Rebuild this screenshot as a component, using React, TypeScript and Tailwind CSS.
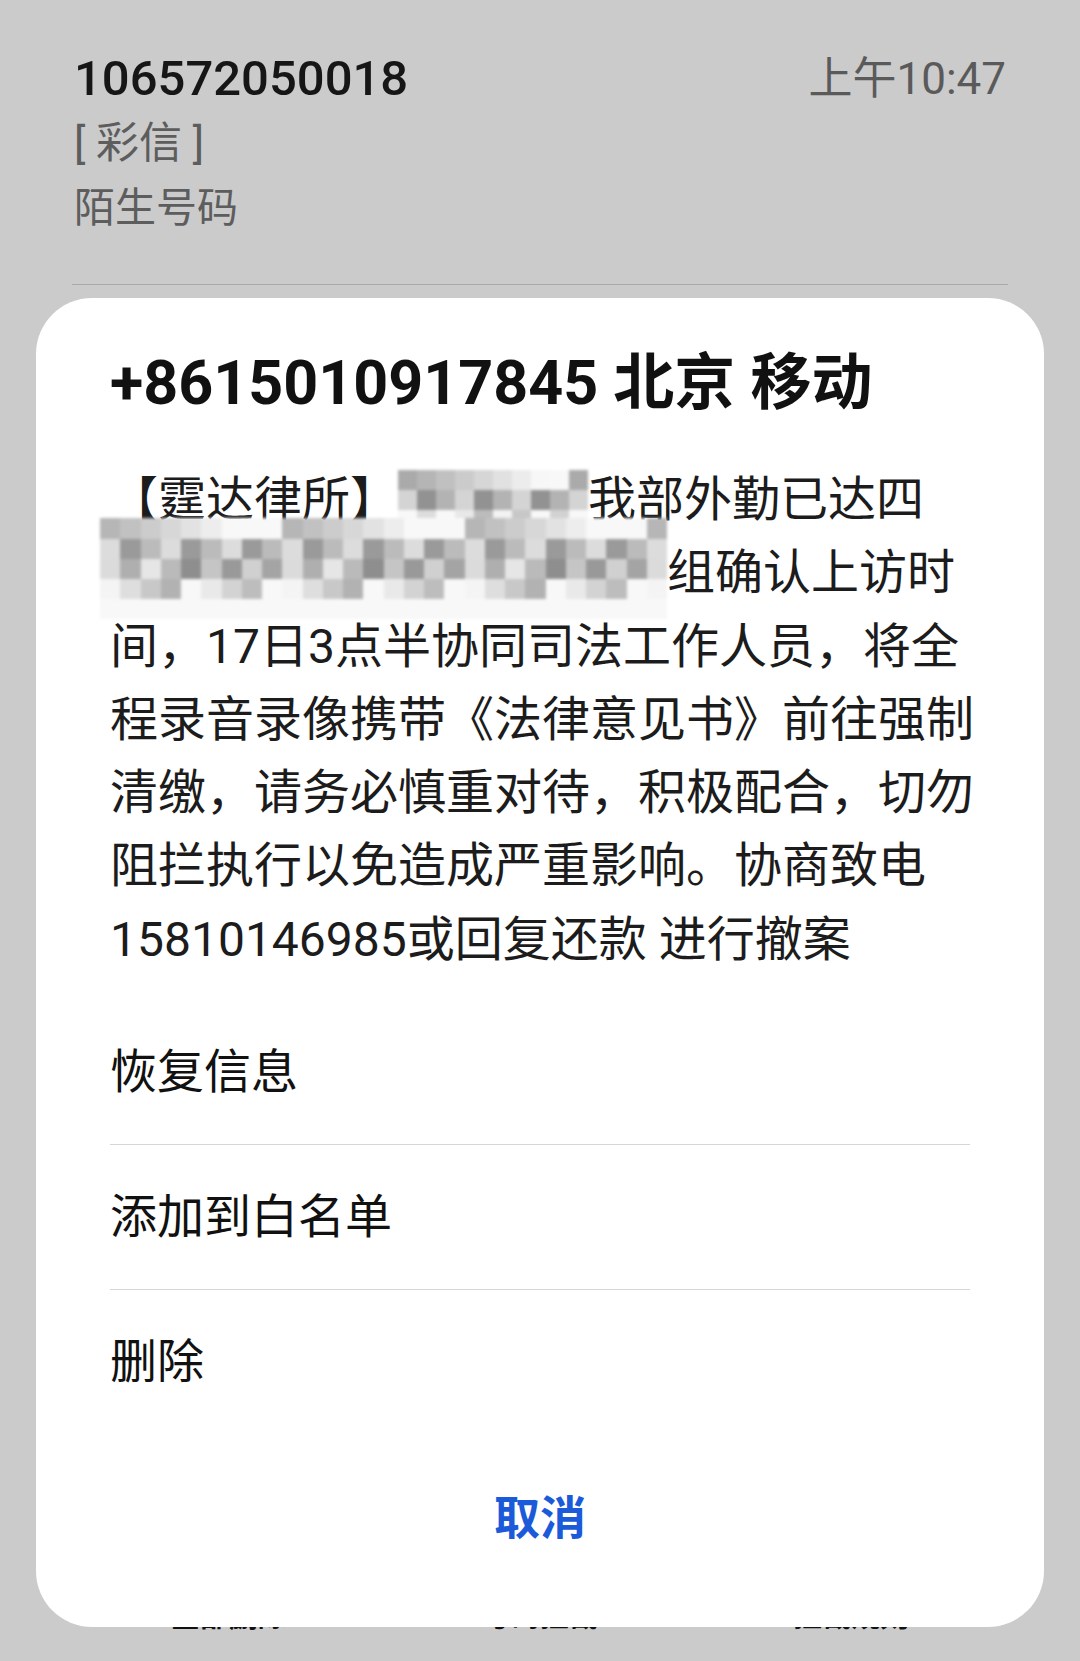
import React from 'react';

const FONT = "font-['Roboto','Noto_Sans_CJK_SC',sans-serif]";

function shade(row: number, col: number, base: number[]) {
  const jitter = ((col * 37 + row * 53 + col * row * 11) % 9) - 4;
  const v = Math.max(128, Math.min(248, base[row] + jitter * 11));
  return `rgb(${v},${v},${v})`;
}

// pixelated redaction over part of the message
function Mosaic({ cols, base, className }: { cols: number; base: number[]; className: string }) {
  return (
    <div className={`flex flex-col shrink-0 overflow-hidden blur-[1.5px] ${className}`}>
      {base.map((_, r) => (
        <div key={r} className="flex flex-1">
          {Array.from({ length: cols }).map((__, c) => (
            <div key={c} className="flex-1" style={{ backgroundColor: shade(r, c, base) }} />
          ))}
        </div>
      ))}
    </div>
  );
}

const lines = [
  '间，17日3点半协同司法工作人员，将全',
  '程录音录像携带《法律意见书》前往强制',
  '清缴，请务必慎重对待，积极配合，切勿',
  '阻拦执行以免造成严重影响。协商致电',
  '15810146985或回复还款 进行撤案',
];

const actions = ['恢复信息', '添加到白名单', '删除'];

export default function App() {
  return (
    <div className={`relative h-[1661px] w-[1080px] bg-[#cbcbcb] flex flex-col ${FONT}`}>
      {/* message list behind the sheet */}
      <div className="px-[74px] pt-[46px]">
        <div className="flex h-[65px] items-center justify-between">
          <span className="text-[49px] font-medium text-[#161616]">106572050018</span>
          <span className="text-[44px] text-[#5a5a5a]">上午10:47</span>
        </div>
        <div className="flex h-[65px] items-center text-[43px] text-[#5d5d5d]">[ 彩信 ]</div>
        <div className="flex h-[65px] items-center text-[41px] text-[#5d5d5d]">陌生号码</div>
      </div>
      <div className="mx-[72px] mt-[43px] h-px bg-[#a9a9a9]" />
      <div className="flex-1" />
      <div className="grid grid-cols-3 px-[73px] pb-[29px] text-center text-[29px] font-bold leading-[30px] text-[#111]">
        <span>全部删除</span>
        <span>号码拦截</span>
        <span>拦截规则</span>
      </div>

      {/* action sheet */}
      <div className="absolute left-[36px] top-[298px] w-[1008px] rounded-[56px] bg-white px-[74px] pt-[45px] pb-[26px]">
        <div className="h-[80px] whitespace-nowrap text-[61px] font-bold leading-[80px] text-[#111]">
          +8615010917845 北京 移动
        </div>

        <div className="mt-[40px] text-[48px] leading-[73.3px] text-[#1c1c1c]">
          <div className="flex h-[73.3px] items-start whitespace-nowrap">
            <span>【霆达律所】</span>
            <Mosaic cols={10} base={[214, 168, 232]} className="mt-[7px] h-[60px] w-[190px]" />
            <span>我部外勤已达四</span>
          </div>
          <div className="relative flex h-[73.3px] items-start whitespace-nowrap">
            <Mosaic
              cols={28}
              base={[226, 176, 186, 222, 240]}
              className="-ml-[10px] -mt-[18px] h-[101px] w-[567px]"
            />
            <span>组确认上访时</span>
          </div>
          {lines.map((l) => (
            <div key={l} className="h-[73.3px] whitespace-nowrap">
              {l}
            </div>
          ))}
        </div>

        <div className="mt-[24px]">
          {actions.map((a, i) => (
            <div
              key={a}
              className={`flex h-[145px] items-center text-[47px] text-[#111] ${
                i < actions.length - 1 ? 'border-b border-[#d6d6d6]' : ''
              }`}
            >
              {a}
            </div>
          ))}
        </div>

        <div className="flex h-[166px] items-center justify-center text-[46px] font-bold text-[#1b5ad8]">
          取消
        </div>
      </div>
    </div>
  );
}
